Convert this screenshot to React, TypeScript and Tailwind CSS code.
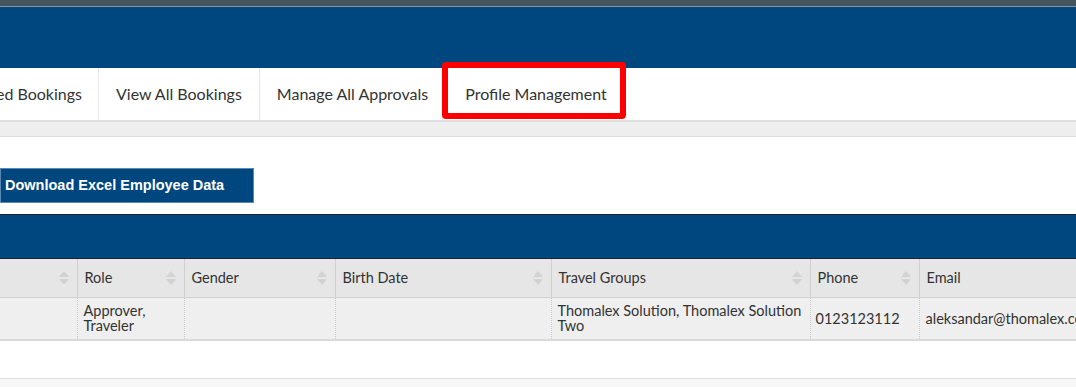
import React from "react";

const SortIcon = () => (
  <svg width="12" height="18" viewBox="0 0 12 18" className="shrink-0">
    <polygon points="1,8 6,2 11,8" fill="#d2d2d2" />
    <polygon points="1,10 6,16 11,10" fill="#d2d2d2" />
  </svg>
);

const headers: { label: string; w: number }[] = [
  { label: "", w: 77 },
  { label: "Role", w: 107 },
  { label: "Gender", w: 151 },
  { label: "Birth Date", w: 216 },
  { label: "Travel Groups", w: 259 },
  { label: "Phone", w: 109 },
  { label: "Email", w: 260 },
];

export default function App() {
  return (
    <div className="w-[1076px] h-[387px] overflow-hidden bg-white font-['Lato',sans-serif] text-[#333]">
      <div className="h-[6px] bg-[#45545e]" />
      <div className="h-px bg-[#8a9499]" />
      <div className="h-[61px] bg-[#00467f]" />
      <nav className="h-[54px] flex bg-white border-b-2 border-[#dedede] text-[16px]">
        <div className="-ml-[4px] flex items-center pr-[16px] border-r border-[#e8e8e8] whitespace-nowrap">
          ed Bookings
        </div>
        <div className="flex items-center px-[17px] border-r border-[#e8e8e8] whitespace-nowrap">
          View All Bookings
        </div>
        <div className="flex items-center pl-[17px] pr-[14px] border-r border-[#e8e8e8] whitespace-nowrap">
          Manage All Approvals
        </div>
        <div className="relative flex items-center w-[183px] pl-[22px] whitespace-nowrap">
          Profile Management
          <div className="absolute left-[-1px] right-0 top-[-6px] bottom-[1px] border-[6px] border-[#ff0000] rounded-[4px]" />
        </div>
      </nav>
      <div className="h-[15px] bg-[#eeeeee] border-b border-[#dcdcdc]" />
      <div className="h-[77px] pt-[31px] bg-white">
        <button className="h-[35px] w-[254px] bg-[#00467f] border border-[#5b88b0] text-white font-bold text-[14.5px] font-['Liberation_Sans',Arial,sans-serif] text-left pl-[4px]">
          Download Excel Employee Data
        </button>
      </div>
      <div className="h-[45px] bg-[#00467f] border-t border-b border-[#1a2530]" />
      <table className="table-fixed border-collapse w-[1179px]">
        <colgroup>
          {headers.map((h, i) => (
            <col key={i} style={{ width: h.w }} />
          ))}
        </colgroup>
        <thead>
          <tr className="h-[38px] bg-[#e6e6e6]">
            {headers.map((h, i) => (
              <th
                key={i}
                className="border-r border-b border-[#d0d0d0] px-[7px] text-left font-normal text-[14.5px] align-middle"
              >
                <div className="flex items-center justify-between">
                  <span>{h.label}</span>
                  {i < 6 && <SortIcon />}
                </div>
              </th>
            ))}
          </tr>
        </thead>
        <tbody>
          <tr className="h-[43px] bg-[#efefef] text-[14.5px] leading-[15px] border-b-2 border-[#dadada]">
            <td className="border-r border-dotted border-[#c8c8c8]" />
            <td className="border-r border-dotted border-[#c8c8c8] px-[6px] align-middle">
              Approver,
              <br />
              Traveler
            </td>
            <td className="border-r border-dotted border-[#c8c8c8]" />
            <td className="border-r border-dotted border-[#c8c8c8]" />
            <td className="border-r border-dotted border-[#c8c8c8] px-[6px] align-middle">
              Thomalex Solution, Thomalex Solution
              <br />
              Two
            </td>
            <td className="border-r border-dotted border-[#c8c8c8] px-[5px] align-middle">
              0123123112
            </td>
            <td className="px-[6px] align-middle whitespace-nowrap">
              aleksandar@thomalex.com
            </td>
          </tr>
        </tbody>
      </table>
      <div className="h-[37px] bg-white" />
      <div className="h-[20px] bg-[#f7f7f7] border-t border-[#dedede]" />
    </div>
  );
}
